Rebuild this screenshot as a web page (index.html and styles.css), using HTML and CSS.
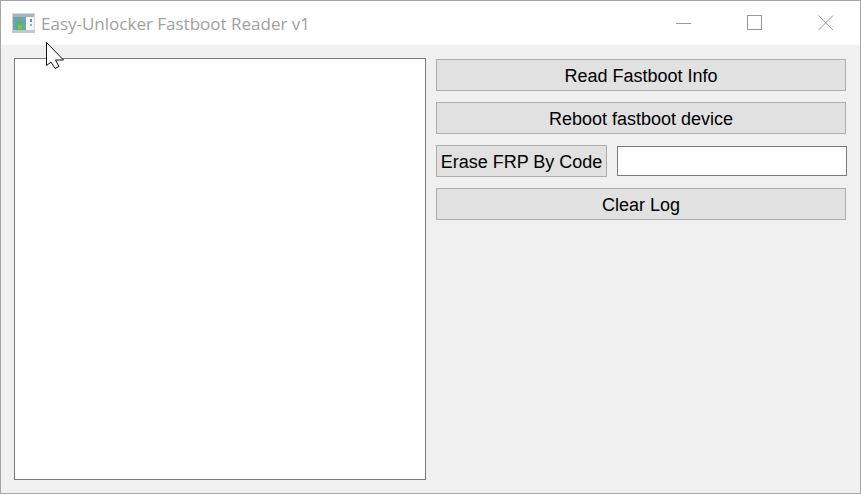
FILE: index.html
```html
<!DOCTYPE html>
<html lang="en">
<head>
<meta charset="utf-8">
<title>Easy-Unlocker Fastboot Reader v1</title>
<link rel="stylesheet" href="styles.css">
</head>
<body>
<div class="window">
  <header class="titlebar">
    <svg class="app-icon" width="23" height="20" viewBox="0 0 23 20" aria-hidden="true">
      <rect x="0" y="0" width="23" height="20" fill="#d3d7d9"/>
      <rect x="1" y="1" width="21" height="3" fill="#a9b3b9"/>
      <rect x="1" y="4" width="13" height="13" fill="#6fa3ad"/>
      <rect x="4" y="8" width="7" height="9" fill="#5bb07a"/>
      <rect x="6" y="12" width="4" height="4" fill="#74c45a"/>
      <rect x="14" y="4" width="8" height="13" fill="#f4f6f6"/>
      <rect x="18" y="6" width="2" height="3" fill="#5c9ea0"/>
      <rect x="18" y="11" width="2" height="2" fill="#8db0b5"/>
      <rect x="0" y="17" width="23" height="3" fill="#c2c7ca"/>
    </svg>
    <span class="title">Easy-Unlocker Fastboot Reader v1</span>
    <div class="controls">
      <svg class="ctl" width="16" height="16" viewBox="0 0 16 16" aria-hidden="true"><path d="M0 8.5H15" stroke="#999" fill="none"/></svg>
      <svg class="ctl" width="16" height="16" viewBox="0 0 16 16" aria-hidden="true"><rect x="0.5" y="0.5" width="14" height="14" stroke="#999" fill="none"/></svg>
      <svg class="ctl" width="16" height="16" viewBox="0 0 16 16" aria-hidden="true"><path d="M0.5 0.5L15 15M15 0.5L0.5 15" stroke="#999" fill="none"/></svg>
    </div>
  </header>
  <main class="content">
    <div class="log"></div>
    <div class="side">
      <button class="btn" type="button">Read Fastboot Info</button>
      <button class="btn" type="button">Reboot fastboot device</button>
      <div class="row">
        <button class="btn btn-code" type="button">Erase FRP By Code</button>
        <input class="code" type="text" aria-label="Code">
      </div>
      <button class="btn" type="button">Clear Log</button>
    </div>
  </main>
  <svg class="cursor" width="20" height="28" viewBox="0 0 20 28" aria-hidden="true">
    <path d="M0.5 0.5V23.5L5 20L9 26.5L13 24.5L9.5 18H17.5Z" fill="#fff" stroke="#111" stroke-width="1"/>
  </svg>
</div>
</body>
</html>
```
FILE: styles.css
```css
* { box-sizing: border-box; }
html, body { margin: 0; padding: 0; }
body { width: 861px; height: 494px; overflow: hidden; background: #efefef; }
.window {
  position: relative;
  width: 861px;
  height: 494px;
  border: 1px solid #a6a6a6;
  background: #f0f0f0;
  display: flex;
  flex-direction: column;
}
.titlebar {
  height: 44px;
  background: #fff;
  display: flex;
  align-items: center;
  padding-left: 11px;
  flex: none;
}
.app-icon { margin-top: -1px; }
.title {
  margin-left: 6px;
  font-family: "Open Sans", "Noto Sans", sans-serif;
  font-size: 17px;
  color: #a0a0a0;
  white-space: nowrap;
}
.controls {
  margin-left: auto;
  display: flex;
  gap: 55px;
  padding-right: 26px;
}
.ctl { display: block; }
.content {
  flex: 1;
  display: flex;
  align-items: flex-start;
  padding: 13px;
  gap: 10px;
}
.log {
  width: 412px;
  height: 422px;
  border: 1px solid #7a7a7a;
  background: #fff;
}
.side {
  width: 411px;
  padding-top: 1px;
  display: flex;
  flex-direction: column;
  align-items: flex-start;
  gap: 11px;
}
.btn {
  height: 32px;
  width: 410px;
  margin: 0;
  padding: 2px 0 0;
  border: 1px solid #adadad;
  border-radius: 0;
  background: #e1e1e1;
  color: #000;
  font-family: "Liberation Sans", Arial, sans-serif;
  font-size: 18px;
}
.row {
  display: flex;
  align-items: center;
  gap: 10px;
  width: 411px;
}
.btn-code { width: 171px; flex: none; }
.code {
  width: 230px;
  height: 30px;
  flex: none;
  margin: 0;
  padding: 0;
  border: 1px solid #7a7a7a;
  border-radius: 0;
  background: #fff;
}
.cursor { position: absolute; left: 45px; top: 41px; }
```
